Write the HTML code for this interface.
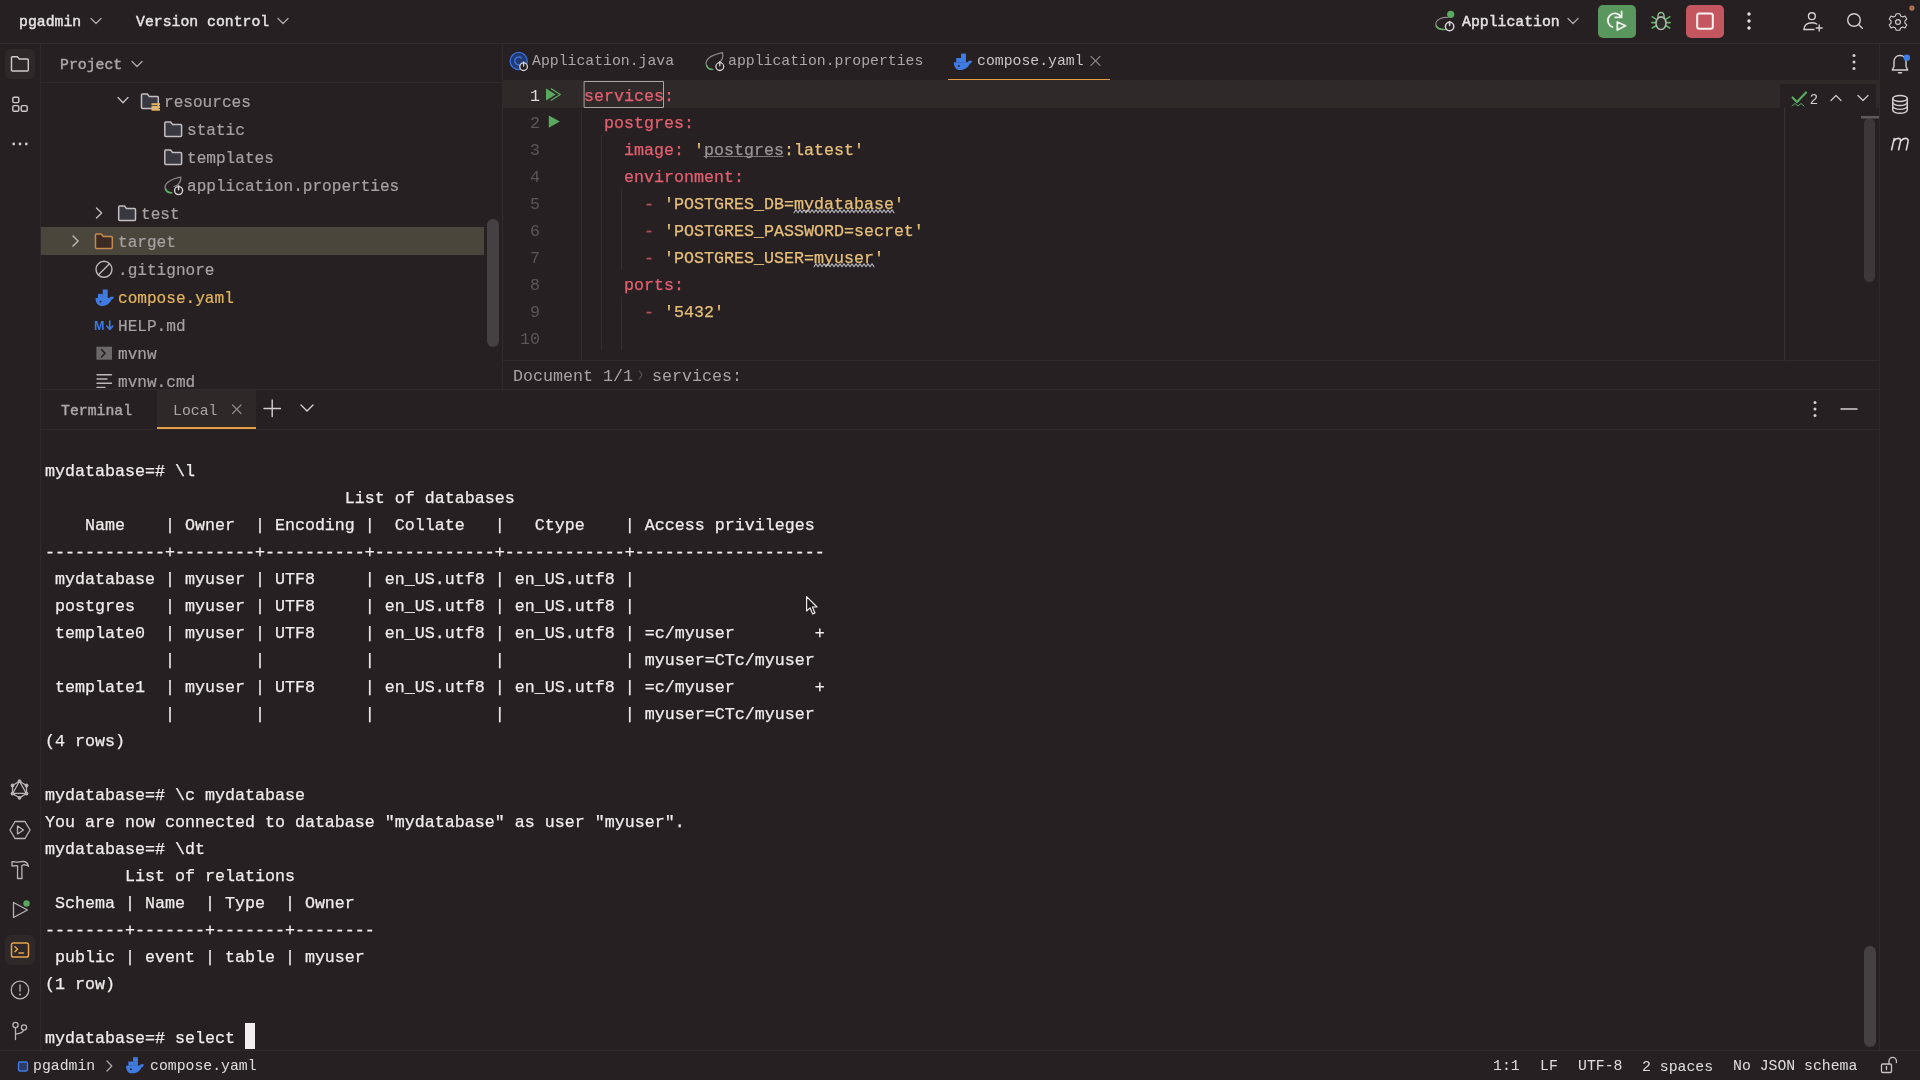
<!DOCTYPE html>
<html><head><meta charset="utf-8">
<style>
*{margin:0;padding:0;box-sizing:border-box}
html,body{width:1920px;height:1080px;overflow:hidden;background:#262022}
body{position:relative;font-family:"Liberation Mono",monospace;color:#dfdadb}
.tree,.term,.ed,.ln,.ui,.a,svg{will-change:transform}
.a{position:absolute}
.hl{position:absolute;background:#302a2c}
.vl{position:absolute;background:#302a2c;width:1px}
pre{font-family:"Liberation Mono",monospace;margin:0}
.ui{font-size:14.8px;white-space:pre}
.term{position:absolute;left:45px;top:458px;font-size:16.667px;line-height:27px;color:#f0ecec;white-space:pre;-webkit-text-stroke:0.25px #f0ecec}
.ed{position:absolute;left:584px;top:83px;font-size:16.667px;line-height:27px;white-space:pre;color:#d6d0d2;-webkit-text-stroke:0.25px currentColor}
.ln{position:absolute;left:503px;width:37px;top:83px;font-size:16.667px;line-height:27px;text-align:right;color:#5d5658;white-space:pre}
.tree{position:absolute;font-size:16.08px;line-height:28px;white-space:pre;color:#a6a0a2;-webkit-text-stroke:0.2px currentColor}
svg{position:absolute;overflow:visible}
.k{color:#e2606f}.c{color:#e2606f}.s{color:#e6c07b}.d{color:#b3525d}.g{color:#9b9396}
</style></head><body>

<!-- separators -->
<div class="hl" style="left:0;top:43px;width:1920px;height:1px"></div>
<div class="vl" style="left:40px;top:44px;height:1006px"></div>
<div class="vl" style="left:1879px;top:44px;height:1006px"></div>
<div class="vl" style="left:502px;top:44px;height:346px"></div>
<div class="hl" style="left:41px;top:82px;width:461px;height:1px"></div>
<div class="hl" style="left:503px;top:360px;width:1376px;height:1px"></div>
<div class="hl" style="left:41px;top:389px;width:1838px;height:1px"></div>
<div class="hl" style="left:41px;top:429px;width:1838px;height:1px"></div>
<div class="hl" style="left:0;top:1050px;width:1920px;height:1px"></div>

<!-- top bar -->
<div class="a ui" style="left:19px;top:10.5px;line-height:22px;font-weight:normal;-webkit-text-stroke:0.45px #e6e2e3;color:#e6e2e3">pgadmin</div>
<div class="a ui" style="left:136px;top:10.5px;line-height:22px;font-weight:normal;-webkit-text-stroke:0.45px #e6e2e3;color:#e6e2e3">Version control</div>
<div class="a ui" style="left:1462px;top:10.5px;line-height:22px;font-weight:normal;-webkit-text-stroke:0.45px #e6e2e3;color:#e6e2e3">Application</div>
<div class="a" style="left:1598px;top:5px;width:38px;height:33px;border-radius:5px;background:#59975e"></div>
<div class="a" style="left:1686px;top:5px;width:38px;height:33px;border-radius:5px;background:#c45660"></div>

<!-- left strip -->
<div class="a" style="left:5px;top:49px;width:30px;height:30px;border-radius:6px;background:#2e2829"></div>
<div class="a" style="left:5px;top:935px;width:30px;height:30px;border-radius:6px;background:#2e2829"></div>

<!-- project panel -->
<div class="a ui" style="left:60px;top:54px;line-height:22px;font-weight:normal;-webkit-text-stroke:0.45px #aca6a8;color:#aca6a8">Project</div>
<div class="a" style="left:41px;top:227px;width:443px;height:28px;background:#4a463b"></div>
<div class="a" style="left:487px;top:219px;width:12px;height:128px;border-radius:6px;background:#454041"></div>
<div class="a" style="left:41px;top:83px;width:461px;height:306px;overflow:hidden">
<div class="tree" style="left:122.6px;top:6.4px">resources</div>
<div class="tree" style="left:145.9px;top:34.4px">static</div>
<div class="tree" style="left:145.9px;top:62.4px">templates</div>
<div class="tree" style="left:145.9px;top:90.4px">application.properties</div>
<div class="tree" style="left:99.9px;top:118.4px">test</div>
<div class="tree" style="left:76.5px;top:146.4px">target</div>
<div class="tree" style="left:76.5px;top:174.4px">.gitignore</div>
<div class="tree" style="left:76.5px;top:202.4px;color:#e2b55e">compose.yaml</div>
<div class="tree" style="left:76.5px;top:230.4px">HELP.md</div>
<div class="tree" style="left:76.5px;top:258.4px">mvnw</div>
<div class="tree" style="left:76.5px;top:286.4px">mvnw.cmd</div>
</div>

<!-- editor tabs -->
<div class="a ui" style="left:532px;top:50px;line-height:22px;color:#aca6a8">Application.java</div>
<div class="a ui" style="left:728px;top:50px;line-height:22px;color:#aca6a8">application.properties</div>
<div class="a ui" style="left:977px;top:50px;line-height:22px;color:#c9c4c5">compose.yaml</div>
<div class="a" style="left:948px;top:79px;width:162px;height:2px;background:#e79f45"></div>

<!-- editor -->
<div class="a" style="left:503px;top:80px;width:1376px;height:28px;background:#2f292a"></div>
<div class="a" style="left:1780px;top:84px;width:96px;height:24px;background:#262022"></div>
<div class="ln"><span style="color:#dfdadb">1</span>
2
3
4
5
6
7
8
9
10</div>
<div class="ed"><span class="k">services</span><span class="c">:</span>
  <span class="k">postgres</span><span class="c">:</span>
    <span class="k">image</span><span class="c">:</span> <span class="s">'</span><span class="g">postgres</span><span class="s">:latest'</span>
    <span class="k">environment</span><span class="c">:</span>
      <span class="d">-</span> <span class="s">'POSTGRES_DB=mydatabase'</span>
      <span class="d">-</span> <span class="s">'POSTGRES_PASSWORD=secret'</span>
      <span class="d">-</span> <span class="s">'POSTGRES_USER=myuser'</span>
    <span class="k">ports</span><span class="c">:</span>
      <span class="d">-</span> <span class="s">'5432'</span>
</div>
<div class="a" style="left:513px;top:363px;font-size:16.667px;line-height:27px;white-space:pre;color:#a9a3a5">Document 1/1</div>
<div class="a" style="left:652px;top:363px;font-size:16.667px;line-height:27px;white-space:pre;color:#a9a3a5">services:</div>

<!-- terminal header -->
<div class="a" style="left:157px;top:390px;width:99px;height:39px;background:#2e2829"></div>
<div class="a" style="left:157px;top:427px;width:99px;height:2px;background:#e79f45"></div>
<div class="a ui" style="left:61px;top:399.5px;line-height:22px;font-weight:normal;-webkit-text-stroke:0.45px #aca6a8;color:#aca6a8">Terminal</div>
<div class="a ui" style="left:173px;top:399.5px;line-height:22px;color:#aca6a8">Local</div>

<!-- terminal -->
<div class="term">mydatabase=# \l
                              List of databases
    Name    | Owner  | Encoding |  Collate   |   Ctype    | Access privileges
------------+--------+----------+------------+------------+-------------------
 mydatabase | myuser | UTF8     | en_US.utf8 | en_US.utf8 |
 postgres   | myuser | UTF8     | en_US.utf8 | en_US.utf8 |
 template0  | myuser | UTF8     | en_US.utf8 | en_US.utf8 | =c/myuser        +
            |        |          |            |            | myuser=CTc/myuser
 template1  | myuser | UTF8     | en_US.utf8 | en_US.utf8 | =c/myuser        +
            |        |          |            |            | myuser=CTc/myuser
(4 rows)

mydatabase=# \c mydatabase
You are now connected to database "mydatabase" as user "myuser".
mydatabase=# \dt
        List of relations
 Schema | Name  | Type  | Owner
--------+-------+-------+--------
 public | event | table | myuser
(1 row)

mydatabase=# select </div>
<div class="a" style="left:245px;top:1023px;width:10px;height:26px;background:#f3eeef"></div>
<div class="a" style="left:1864px;top:946px;width:12px;height:101px;border-radius:6px;background:#454041"></div>

<!-- status bar -->
<div class="a ui" style="left:33px;top:1055px;line-height:22px;color:#e0dcdd">pgadmin</div>
<div class="a ui" style="left:150px;top:1055px;line-height:22px;color:#e0dcdd">compose.yaml</div>
<div class="a ui" style="left:1493px;top:1055px;line-height:22px;color:#e0dcdd">1:1</div>
<div class="a ui" style="left:1540px;top:1055px;line-height:22px;color:#e0dcdd">LF</div>
<div class="a ui" style="left:1578px;top:1055px;line-height:22px;color:#e0dcdd">UTF-8</div>
<div class="a ui" style="left:1642px;top:1056px;line-height:22px;color:#e0dcdd">2 spaces</div>
<div class="a ui" style="left:1733px;top:1055px;line-height:22px;color:#e0dcdd">No JSON schema</div>


<svg width="1920" height="1080" style="left:0;top:0" fill="none" stroke-linecap="round" stroke-linejoin="round">
<!-- TOPBAR -->
<g stroke="#aaa4a6" stroke-width="1.4">
<polyline points="91,18.5 96,23.5 101,18.5"/>
<polyline points="278,18.5 283,23.5 288,18.5"/>
<polyline points="1568,18.5 1573,23.5 1578,18.5"/>
</g>
<!-- run config icon -->
<path d="M1448,17.5 C1443,17 1436,19 1435.8,24 C1435.6,28.5 1440,30 1446,29.5" stroke="#8e888a" stroke-width="1.2"/>
<path d="M1436.5,26 C1437.5,28.5 1440,29.5 1444,29.5" stroke="#5bb35f" stroke-width="1.6"/>
<circle cx="1449.6" cy="26.5" r="4.2" stroke="#d8d3d4" stroke-width="1.5"/>
<line x1="1449.6" y1="21.5" x2="1449.6" y2="25.5" stroke="#d8d3d4" stroke-width="1.5"/>
<circle cx="1450.7" cy="14.3" r="3.6" fill="#5aab60"/>
<!-- rerun -->
<path d="M1621,17 A7,7 0 1 0 1612.5,27" stroke="#f2eeee" stroke-width="1.8"/>
<polyline points="1615.2,17.3 1621.6,17.3 1621.6,11.5" stroke="#f2eeee" stroke-width="1.8"/>
<path d="M1617.3,22 L1625.6,25.8 L1617.3,30 Z" stroke="#f2eeee" stroke-width="1.8"/>
<!-- bug -->
<g stroke="#5fb864" stroke-width="1.6">
<line x1="1652.3" y1="16.8" x2="1656" y2="19.2"/><line x1="1669.7" y1="16.8" x2="1666" y2="19.2"/>
<line x1="1651.8" y1="22.6" x2="1655.8" y2="22.6"/><line x1="1666.2" y1="22.6" x2="1670.2" y2="22.6"/>
<line x1="1652.3" y1="28" x2="1656" y2="25.8"/><line x1="1669.7" y1="28" x2="1666" y2="25.8"/>
</g>
<path d="M1657.8,17.5 C1657.8,14.5 1659,12.5 1661,12.5 C1663,12.5 1664.2,14.5 1664.2,17.5" stroke="#8fb592" stroke-width="1.5"/>
<ellipse cx="1661" cy="23.2" rx="5" ry="6.3" stroke="#a9b9aa" stroke-width="1.6" fill="#2c2a2b"/>
<!-- stop -->
<rect x="1697.2" y="13.4" width="15.6" height="15.4" rx="2" stroke="#f7f3f3" stroke-width="2"/>
<!-- kebab -->
<g fill="#e8e4e5"><circle cx="1749" cy="14" r="1.7"/><circle cx="1749" cy="21" r="1.7"/><circle cx="1749" cy="28" r="1.7"/></g>
<!-- person add -->
<g stroke="#d4cfd0" stroke-width="1.4">
<circle cx="1811.9" cy="16.2" r="3.4"/>
<path d="M1804,29.5 C1804,25 1807.5,22.7 1812,22.7 C1814,22.7 1815.5,23.2 1816.8,24"/>
<line x1="1804" y1="29.5" x2="1814" y2="29.5"/>
<line x1="1819.2" y1="25" x2="1819.2" y2="31"/><line x1="1816.2" y1="28" x2="1822.2" y2="28"/>
</g>
<!-- search -->
<g stroke="#d4cfd0" stroke-width="1.4"><circle cx="1854" cy="20" r="6.3"/><line x1="1858.6" y1="24.6" x2="1862.3" y2="28.3"/></g>
<!-- gear -->
<g transform="translate(1898,22) scale(0.87) translate(-1898,-22)">
<path d="M1896,12.5 L1900,12.5 L1901,15 L1903.5,16.2 L1906,15.2 L1908,18.6 L1906,20.6 L1906,23.4 L1908,25.4 L1906,28.8 L1903.5,27.8 L1901,29 L1900,31.5 L1896,31.5 L1895,29 L1892.5,27.8 L1890,28.8 L1888,25.4 L1890,23.4 L1890,20.6 L1888,18.6 L1890,15.2 L1892.5,16.2 L1895,15 Z" stroke="#d4cfd0" stroke-width="1.3"/>
<circle cx="1898" cy="22" r="2.8" stroke="#d4cfd0" stroke-width="1.3"/>
</g>
<circle cx="1911.9" cy="8.1" r="2.6" fill="#a87a55"/><circle cx="1911.9" cy="8.1" r="1" fill="#c0504a"/>
<!-- RIGHT STRIP -->
<g stroke="#d4cfd0" stroke-width="1.4">
<path d="M1892.3,70 L1907.7,70 L1906,66.5 L1906,62 C1906,58 1903.5,55.5 1900,55.5 C1896.5,55.5 1894,58 1894,62 L1894,66.5 Z"/>
<line x1="1898.5" y1="72.8" x2="1901.5" y2="72.8"/>
<ellipse cx="1900" cy="98.5" rx="7.3" ry="3"/>
<path d="M1892.7,98.5 L1892.7,110 C1892.7,111.8 1896,113.3 1900,113.3 C1904,113.3 1907.3,111.8 1907.3,110 L1907.3,98.5"/>
<path d="M1892.7,102.3 C1892.7,104.1 1896,105.5 1900,105.5 C1904,105.5 1907.3,104.1 1907.3,102.3"/>
<path d="M1892.7,106.2 C1892.7,108 1896,109.4 1900,109.4 C1904,109.4 1907.3,108 1907.3,106.2"/>
</g>
<circle cx="1906.8" cy="57.8" r="3.3" fill="#3e7ce6"/>
<path d="M1891.6,149.8 L1894.2,138.6 M1893.6,141.2 C1895,139.2 1896.8,138.4 1898.3,138.4 C1900,138.4 1900.9,139.6 1900.5,141.4 L1898.6,149.8 M1900.5,141.4 C1902,139.3 1903.8,138.4 1905.4,138.4 C1907.3,138.4 1908.5,139.6 1908.1,141.6 L1906.3,149.8" stroke="#dcd7d8" stroke-width="1.6"/>

<!-- LEFT STRIP -->
<g stroke="#cfcacb" stroke-width="1.4">
<path transform="translate(11,56.2)" d="M1.5,0.5 H6.3 L8.3,2.8 H16.3 Q17.3,2.8 17.3,3.8 V13.8 Q17.3,14.8 16.3,14.8 H1.5 Q0.5,14.8 0.5,13.8 V1.5 Q0.5,0.5 1.5,0.5 Z"/>
<rect x="12.8" y="97.2" width="6" height="5.4" rx="1.3"/>
<rect x="12.8" y="105.6" width="6" height="5.6" rx="1.3"/>
<rect x="21.2" y="105.6" width="6" height="5.6" rx="1.3"/>
</g>
<g fill="#cfcacb"><circle cx="13.7" cy="144" r="1.4"/><circle cx="20" cy="144" r="1.4"/><circle cx="26.3" cy="144" r="1.4"/></g>
<g stroke="#b9b3b5" stroke-width="1.3">
<path d="M19.5,781.2 L26.5,785.5 L26.5,793.6 L19.5,797.8 L12.5,793.6 L12.5,785.5 Z"/>
<path d="M19.5,781.2 L26.2,793.3 L12.8,793.3 Z"/>
</g>
<g fill="#b9b3b5"><circle cx="19.5" cy="781.2" r="1.9"/><circle cx="26.5" cy="785.5" r="1.9"/><circle cx="26.5" cy="793.6" r="1.9"/><circle cx="19.5" cy="797.8" r="1.9"/><circle cx="12.5" cy="793.6" r="1.9"/><circle cx="12.5" cy="785.5" r="1.9"/></g>
<g stroke="#b9b3b5" stroke-width="1.3">
<path d="M15,821.5 L25,821.5 L30,830 L25,838.5 L15,838.5 L10,830 Z"/>
<path d="M17.5,826 L23.5,830 L17.5,834 Z"/>
<path d="M12,861.6 C14,861.6 15.5,862.2 17,862.2 C19,862.2 20,861.5 23,861.5 C26,861.5 28,864 28.5,866.3 C27,865.2 25.5,864.6 23.5,864.8 L21.8,865.8 L22,878.5 L17.5,878.5 L17.6,865.8 C16,865.6 14,866 12,866 Z"/>
<path d="M13.5,902.5 L27.5,910 L13.5,917.5 Z"/>
<circle cx="20" cy="990" r="8.8"/>
<line x1="20" y1="985" x2="20" y2="991"/>
<circle cx="15.5" cy="1025" r="2.6"/>
<circle cx="24" cy="1027.5" r="2.6"/>
<path d="M15.5,1027.6 L15.5,1039.5 M15.5,1034 C19,1034 23.5,1032.5 23.5,1030"/>
</g>
<circle cx="20" cy="994.5" r="1" fill="#b9b3b5"/>
<circle cx="26.5" cy="903.5" r="3.2" fill="#5aa85f"/>
<g stroke="#e6a24a" stroke-width="1.5">
<rect x="11.5" y="943" width="17" height="14" rx="1.8"/>
<polyline points="15,946.8 17.5,949.2 15,951.6"/>
<line x1="19" y1="953" x2="23.5" y2="953"/>
</g>
<!-- PROJECT HEADER -->
<polyline points="132,61.5 137,66.5 142,61.5" stroke="#aaa4a6" stroke-width="1.4"/>
<!-- TREE -->
<g stroke="#c0babc" stroke-width="1.4">
<polyline points="118,97.6 123,102.8 128,97.6"/>
<polyline points="96.5,208 101.6,213 96.5,218"/>
<polyline points="73,236 78.1,241 73,246"/>
</g>
<path transform="translate(141,93.6)" d="M1.5,0.5 H6.3 L8.3,2.8 H16.3 Q17.3,2.8 17.3,3.8 V13.8 Q17.3,14.8 16.3,14.8 H1.5 Q0.5,14.8 0.5,13.8 V1.5 Q0.5,0.5 1.5,0.5 Z" fill="#393840" stroke="#c4bec0" stroke-width="1.5"/>
<g fill="#e3b45e"><rect x="151.5" y="103.2" width="8.5" height="2"/><rect x="151.5" y="106" width="8.5" height="2"/><rect x="151.5" y="108.7" width="8.5" height="2"/></g>
<path transform="translate(164.3,121.6)" d="M1.5,0.5 H6.3 L8.3,2.8 H16.3 Q17.3,2.8 17.3,3.8 V13.8 Q17.3,14.8 16.3,14.8 H1.5 Q0.5,14.8 0.5,13.8 V1.5 Q0.5,0.5 1.5,0.5 Z" fill="#393840" stroke="#c4bec0" stroke-width="1.5"/>
<path transform="translate(164.3,149.6)" d="M1.5,0.5 H6.3 L8.3,2.8 H16.3 Q17.3,2.8 17.3,3.8 V13.8 Q17.3,14.8 16.3,14.8 H1.5 Q0.5,14.8 0.5,13.8 V1.5 Q0.5,0.5 1.5,0.5 Z" fill="#393840" stroke="#c4bec0" stroke-width="1.5"/>
<path transform="translate(118.2,205.6)" d="M1.5,0.5 H6.3 L8.3,2.8 H16.3 Q17.3,2.8 17.3,3.8 V13.8 Q17.3,14.8 16.3,14.8 H1.5 Q0.5,14.8 0.5,13.8 V1.5 Q0.5,0.5 1.5,0.5 Z" fill="#393840" stroke="#c4bec0" stroke-width="1.5"/>
<path transform="translate(95,233.6)" d="M1.5,0.5 H6.3 L8.3,2.8 H16.3 Q17.3,2.8 17.3,3.8 V13.8 Q17.3,14.8 16.3,14.8 H1.5 Q0.5,14.8 0.5,13.8 V1.5 Q0.5,0.5 1.5,0.5 Z" fill="#3d2a22" stroke="#c78a4e" stroke-width="1.5"/>
<!-- app props icon -->
<path d="M181,177 C181,182 178,186 174,186.5 M181,177 C176,178 166,180 165,187 C165,191 168,193 172,192.8" stroke="#8e888a" stroke-width="1.2"/>
<path d="M165.5,188.5 C166,191 168,192.5 171,192.8" stroke="#5bb35f" stroke-width="1.5"/>
<circle cx="178.6" cy="190.6" r="4" stroke="#d8d3d4" stroke-width="1.4" fill="#262022"/>
<line x1="178.6" y1="185.8" x2="178.6" y2="189.8" stroke="#d8d3d4" stroke-width="1.4"/>
<!-- gitignore -->
<circle cx="104" cy="269.3" r="8" stroke="#bdb7b9" stroke-width="1.4"/>
<line x1="98.5" y1="274.8" x2="109.5" y2="263.8" stroke="#bdb7b9" stroke-width="1.4"/>
<!-- mvnw -->
<rect x="96.4" y="346.7" width="15.6" height="13" fill="#6c6769"/>
<polyline points="101.5,349.5 105,353.2 101.5,357" stroke="#262022" stroke-width="1.6"/>
<!-- mvnw.cmd lines -->
<g stroke="#bdb7b9" stroke-width="1.4"><line x1="97" y1="374.8" x2="111.5" y2="374.8"/><line x1="97" y1="379" x2="107" y2="379"/><line x1="97" y1="383.2" x2="111.5" y2="383.2"/><line x1="97" y1="387.4" x2="105" y2="387.4"/></g>

<g transform="translate(95.5,289.5) scale(1.0)" fill="#3f7be0" stroke="none"><rect x="7.2" y="0" width="5" height="4.6"/><rect x="2.4" y="4.4" width="4.9" height="4.4"/><rect x="7.2" y="4.4" width="5" height="4.4"/><path d="M0,8.6 H13.5 C14.5,8 15.5,7 16.6,7 L18.3,7.6 C18,9 17,10 16,10 C14.5,14 11,16.5 6,16.5 C2,16.5 0,13 0,8.6 Z"/><circle cx="5" cy="12.3" r="1" fill="#1d2a40"/></g>
<text x="94" y="330" font-family="Liberation Sans" font-weight="bold" font-size="12.5" fill="#3f7be0" stroke="none">M</text>
<path d="M109.8,321 V329 M106.8,326 L109.8,329.5 L112.8,326" stroke="#3f7be0" stroke-width="1.6"/>

<!-- TABS -->
<circle cx="518.7" cy="61" r="8.6" fill="#213a72" stroke="#3b70dc" stroke-width="1.3"/>
<path d="M521.5,58 A4,4 0 1 0 521.5,64" stroke="#3b70dc" stroke-width="1.6"/>
<circle cx="523.6" cy="66.7" r="3.8" stroke="#d8d3d4" stroke-width="1.3" fill="#262022"/>
<line x1="523.6" y1="61.8" x2="523.6" y2="66" stroke="#d8d3d4" stroke-width="1.3"/>
<path d="M722.5,52.5 C717,54 707,56 706,63 C706,67 709,69.5 713,69.5 M722.5,52.5 C723.5,57 722,61 719.5,62" stroke="#8e888a" stroke-width="1.2"/>
<path d="M706.8,65.5 C707.5,68 709.5,69.3 712,69.5" stroke="#5bb35f" stroke-width="1.5"/>
<circle cx="719.8" cy="66.6" r="3.9" stroke="#d8d3d4" stroke-width="1.3" fill="#262022"/>
<line x1="719.8" y1="61.6" x2="719.8" y2="65.8" stroke="#d8d3d4" stroke-width="1.3"/>
<g transform="translate(953.8,53.6) scale(1.0)" fill="#3f7be0" stroke="none"><rect x="7.2" y="0" width="5" height="4.6"/><rect x="2.4" y="4.4" width="4.9" height="4.4"/><rect x="7.2" y="4.4" width="5" height="4.4"/><path d="M0,8.6 H13.5 C14.5,8 15.5,7 16.6,7 L18.3,7.6 C18,9 17,10 16,10 C14.5,14 11,16.5 6,16.5 C2,16.5 0,13 0,8.6 Z"/><circle cx="5" cy="12.3" r="1" fill="#1d2a40"/></g>
<g stroke="#8e888a" stroke-width="1.2"><line x1="1091" y1="56.3" x2="1100" y2="65.3"/><line x1="1100" y1="56.3" x2="1091" y2="65.3"/></g>
<g fill="#d4cfd0"><circle cx="1854" cy="55.5" r="1.5"/><circle cx="1854" cy="62" r="1.5"/><circle cx="1854" cy="68.5" r="1.5"/></g>
<!-- GUTTER -->
<path d="M546,88.6 L555.7,94.5 L546,100.4 Z" fill="#5aa860"/>
<polyline points="551.2,88.8 560.3,94.5 551.2,100.2" stroke="#5aa860" stroke-width="1.3"/>
<path d="M548.8,115.6 L559.9,121.6 L548.8,127.8 Z" fill="#5aa860"/>
<rect x="584.5" y="81.5" width="79" height="26" stroke="#aaa4a6" stroke-width="1"/>
<line x1="581.5" y1="108" x2="581.5" y2="360" stroke="#2f292b" stroke-width="1"/>
<line x1="601.5" y1="135" x2="601.5" y2="350" stroke="#342e30" stroke-width="1"/>
<line x1="621.5" y1="189" x2="621.5" y2="269" stroke="#342e30" stroke-width="1"/>
<line x1="621.5" y1="297" x2="621.5" y2="350" stroke="#342e30" stroke-width="1"/>
<line x1="1784.5" y1="108" x2="1784.5" y2="360" stroke="#393335" stroke-width="1"/>
<line x1="704" y1="156.5" x2="783" y2="156.5" stroke="#8a8486" stroke-width="1" stroke-dasharray="1.5 1"/>
<polyline points="794,212.8 796,209.8 798,212.8 800,209.8 802,212.8 804,209.8 806,212.8 808,209.8 810,212.8 812,209.8 814,212.8 816,209.8 818,212.8 820,209.8 822,212.8 824,209.8 826,212.8 828,209.8 830,212.8 832,209.8 834,212.8 836,209.8 838,212.8 840,209.8 842,212.8 844,209.8 846,212.8 848,209.8 850,212.8 852,209.8 854,212.8 856,209.8 858,212.8 860,209.8 862,212.8 864,209.8 866,212.8 868,209.8 870,212.8 872,209.8 874,212.8 876,209.8 878,212.8 880,209.8 882,212.8 884,209.8 886,212.8 888,209.8 890,212.8 892,209.8 894,212.8" stroke="#b9bcc4" stroke-width="1.1"/>
<polyline points="814,266.8 816,263.8 818,266.8 820,263.8 822,266.8 824,263.8 826,266.8 828,263.8 830,266.8 832,263.8 834,266.8 836,263.8 838,266.8 840,263.8 842,266.8 844,263.8 846,266.8 848,263.8 850,266.8 852,263.8 854,266.8 856,263.8 858,266.8 860,263.8 862,266.8 864,263.8 866,266.8 868,263.8 870,266.8 872,263.8 874,266.8" stroke="#b9bcc4" stroke-width="1.1"/>
<!-- inspection widget -->
<path d="M1792.5,97.5 L1797,102 L1806,92.5" stroke="#5aa860" stroke-width="2.2"/>
<path d="M1792,106 L1795,103.5 L1798,106 L1801,103.5 L1804,106" stroke="#5aa860" stroke-width="1"/>
<text x="1810" y="103.5" font-family="Liberation Sans" font-size="14" fill="#d4cfd0" stroke="none">2</text>
<polyline points="1831,100.5 1836,95.5 1841,100.5" stroke="#c9c4c5" stroke-width="1.3"/>
<polyline points="1858,95.5 1863,100.5 1868,95.5" stroke="#c9c4c5" stroke-width="1.3"/>
<rect x="1864" y="118" width="11" height="164" rx="5.5" fill="#3d3739"/>
<rect x="1861" y="116" width="18" height="2.5" fill="#5d585b"/>
<!-- breadcrumb chevron -->
<polyline points="639.5,371 642,375 639.5,379" stroke="#5d5658" stroke-width="1.1"/>
<!-- TERMINAL HEADER -->
<g stroke="#8e888a" stroke-width="1.2"><line x1="232.5" y1="405" x2="241" y2="413.5"/><line x1="241" y1="405" x2="232.5" y2="413.5"/></g>
<g stroke="#d4cfd0" stroke-width="1.4">
<line x1="264" y1="408.5" x2="280.5" y2="408.5"/><line x1="272.2" y1="400" x2="272.2" y2="416.5"/>
<polyline points="301,405 307,411 313,405"/>
<line x1="1841" y1="409" x2="1857" y2="409"/>
</g>
<g fill="#d4cfd0"><circle cx="1815" cy="402.5" r="1.5"/><circle cx="1815" cy="409" r="1.5"/><circle cx="1815" cy="415.5" r="1.5"/></g>
<!-- STATUS BAR -->
<rect x="18.5" y="1062" width="9" height="9" rx="1.5" fill="#2d3b66" stroke="#3f7be0" stroke-width="1.4"/>
<polyline points="107,1061 111.8,1066 107,1071" stroke="#a9a3a5" stroke-width="1.3"/>
<g transform="translate(126,1057.2) scale(0.98)" fill="#3f7be0" stroke="none"><rect x="7.2" y="0" width="5" height="4.6"/><rect x="2.4" y="4.4" width="4.9" height="4.4"/><rect x="7.2" y="4.4" width="5" height="4.4"/><path d="M0,8.6 H13.5 C14.5,8 15.5,7 16.6,7 L18.3,7.6 C18,9 17,10 16,10 C14.5,14 11,16.5 6,16.5 C2,16.5 0,13 0,8.6 Z"/><circle cx="5" cy="12.3" r="1" fill="#1d2a40"/></g>
<g stroke="#c9c4c5" stroke-width="1.3">
<rect x="1881.5" y="1064" width="10" height="8.5" rx="1.2"/>
<path d="M1889,1064 V1061 A3.7,3.7 0 0 1 1896.4,1061 V1062.5"/>
<line x1="1886.5" y1="1066.5" x2="1886.5" y2="1069.5"/>
</g>
<!-- mouse cursor -->
<path d="M806.6,596.6 L806.6,611 L810.1,607.9 L812.7,613.9 L815,612.9 L812.4,607 L817,607 Z" fill="#1e1a1b" stroke="#ece8e9" stroke-width="1.2"/>
</svg>
</body></html>
